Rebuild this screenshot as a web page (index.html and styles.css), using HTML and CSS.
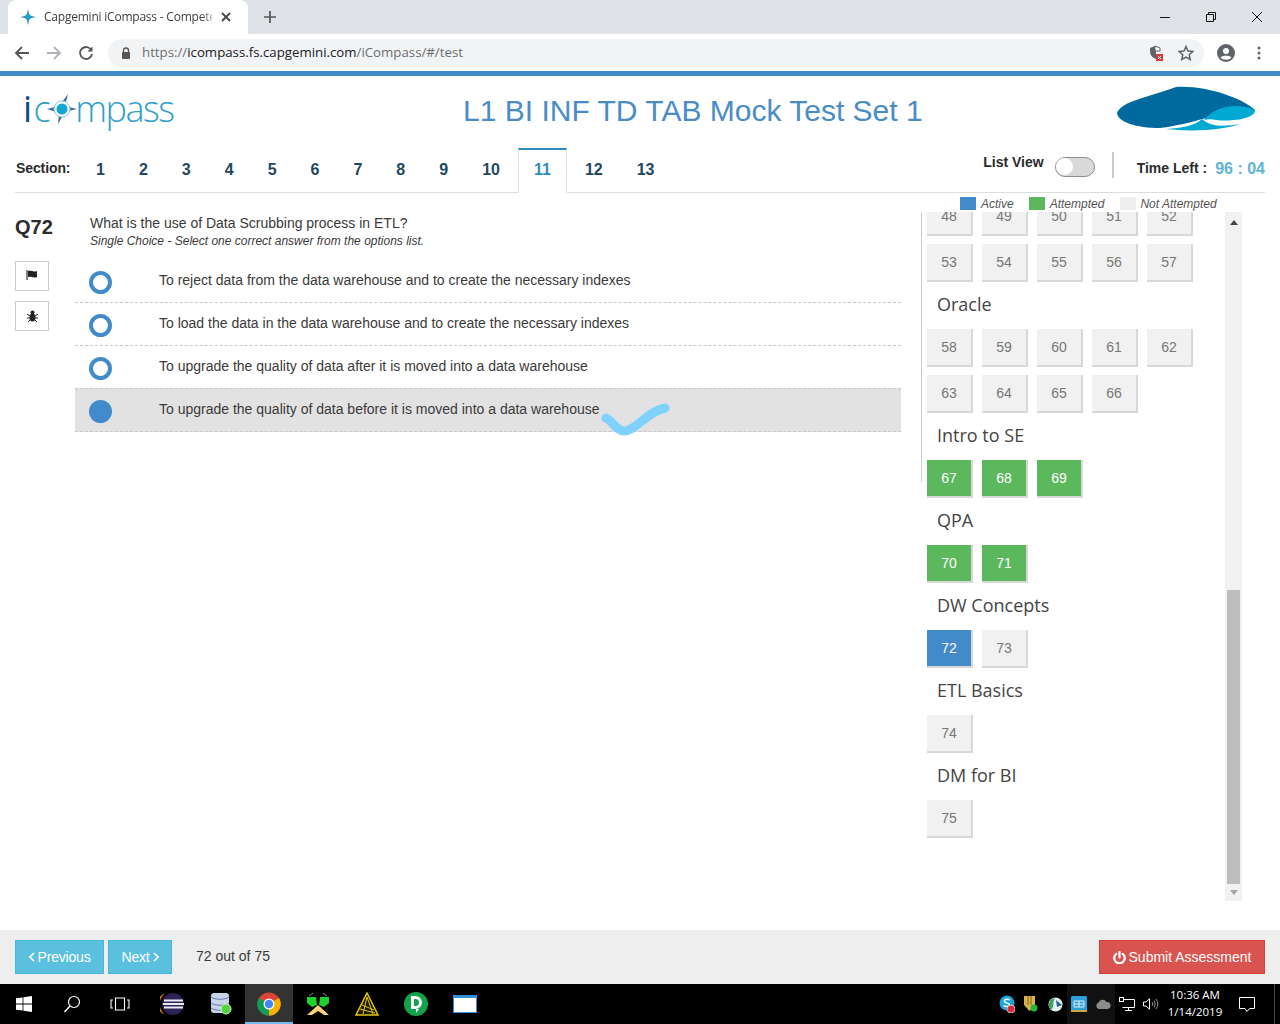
FILE: index.html
```html
<!DOCTYPE html>
<html lang="en">
<head>
<meta charset="utf-8">
<title>Capgemini iCompass</title>
<link rel="stylesheet" href="styles.css">
</head>
<body>
<div class="tabbar">
  <div class="tab">
    <svg class="favicon" width="16" height="16" viewBox="0 0 16 16"><path d="M8 0 9.3 6.7 16 8 9.3 9.3 8 16 6.7 9.3 0 8 6.7 6.7Z" fill="#2f6f9f"/><circle cx="8" cy="8" r="3" fill="#19a5d3"/></svg>
    <span class="tab-title">Capgemini iCompass - Competency Assessment</span>
    <svg class="tab-close" width="10" height="10" viewBox="0 0 10 10"><path d="M1 1 9 9M9 1 1 9" stroke="#444" stroke-width="1.8"/></svg>
  </div>
  <svg class="new-tab" width="12" height="12" viewBox="0 0 12 12"><path d="M6 0V12M0 6H12" stroke="#555" stroke-width="1.7"/></svg>
  <div class="winctl">
    <svg width="12" height="12" viewBox="0 0 12 12"><path d="M1 6.500H11" stroke="#111"/></svg>
    <svg width="12" height="12" viewBox="0 0 12 12"><path d="M1.500 3.500H8.500V10.500H1.500ZM3.500 3.500V1.500H10.500V8.500H8.500" fill="none" stroke="#111"/></svg>
    <svg width="12" height="12" viewBox="0 0 12 12"><path d="M1 1 11 11M11 1 1 11" stroke="#111"/></svg>
  </div>
</div>
<div class="toolbar">
  <svg class="tool" width="16" height="16" viewBox="0 0 16 16"><path d="M15 8H2M8 2 2 8l6 6" fill="none" stroke="#555" stroke-width="1.800"/></svg>
  <svg class="tool" width="16" height="16" viewBox="0 0 16 16"><path d="M1 8H14M8 2l6 6-6 6" fill="none" stroke="#b0b3b7" stroke-width="1.800"/></svg>
  <svg class="tool" width="16" height="16" viewBox="0 0 16 16"><path d="M13.400 5.200A6 6 0 1 0 14 9" fill="none" stroke="#555" stroke-width="1.800"/><path d="M14.500 1.500V6.500H9.500Z" fill="#555"/></svg>
  <div class="omnibox">
    <svg class="lock" width="10" height="12" viewBox="0 0 10 12"><path d="M2.500 5V3.500a2.500 2.500 0 0 1 5 0V5" fill="none" stroke="#555" stroke-width="1.300"/><rect x="1" y="5" width="8" height="7" rx="1" fill="#555"/></svg>
    <span class="url"><span class="url-dim">https://</span>icompass.fs.capgemini.com<span class="url-dim">/iCompass/#/test</span></span>
    <svg class="shield" width="14" height="16" viewBox="0 0 14 16"><path d="M6 1 11 3V6H7V14C3 12.500 1 10 1 6V3Z" fill="#5f6368"/><path d="M6 1 11 3V6H6Z" fill="#fff" stroke="#5f6368"/><rect x="7" y="9" width="7" height="7" fill="#d93b3b"/><path d="M9 11 12 14M12 11 9 14" stroke="#fff"/></svg>
    <svg class="star" width="16" height="16" viewBox="0 0 16 16"><path d="M8 1.500 10 6 14.800 6.500 11.200 9.700 12.200 14.500 8 12 3.800 14.500 4.800 9.700 1.200 6.500 6 6Z" fill="none" stroke="#5f6368" stroke-width="1.500"/></svg>
  </div>
  <svg class="avatar" width="18" height="18" viewBox="0 0 18 18"><circle cx="9" cy="9" r="9" fill="#5f6368"/><circle cx="9" cy="7" r="3" fill="#fff"/><path d="M3.500 13.500C5 11 13 11 14.500 13.500 12 16.500 6 16.500 3.500 13.500Z" fill="#fff"/></svg>
  <svg class="dots" width="4" height="14" viewBox="0 0 4 14"><circle cx="2" cy="2" r="1.500" fill="#5f6368"/><circle cx="2" cy="7" r="1.500" fill="#5f6368"/><circle cx="2" cy="12" r="1.500" fill="#5f6368"/></svg>
</div>

<div class="app">
  <header class="header">
    <div class="brand">
      <span class="brand-i">i</span><span>c</span>
      <svg class="compass" width="32" height="32" viewBox="0 0 32 32"><path d="M22 1 19 13 31 16 19 19 12 31 13 20 1 16 13 13Z" fill="#3f6f9c"/><circle cx="16" cy="16" r="8" fill="#fff" stroke="#8cc6dc" stroke-width="1"/><circle cx="16" cy="16" r="5.500" fill="#12a5d2"/></svg>
      <span>mpass</span>
    </div>
    <h1 class="title">L1 BI INF TD TAB Mock Test Set 1</h1>
    <svg class="cap-logo" width="140" height="46" viewBox="0 0 140 46"><path d="M1 27C6 15 30 12 60 1 90 -1 126 12 139 24 134 32 100 30 86 33 76 36 60 40 44 42 20 42 2 36 1 27Z" fill="#006a9e"/><path d="M88 34C96 22 120 15 139 24 140 32 118 36 100 34 96 33 92 33 88 34Z" fill="#00a9d2"/><path d="M50 43C66 42 78 40 86 33 96 42 110 40 124 38 108 44 76 46 50 43Z" fill="#00a9d2"/></svg>
  </header>

  <nav class="sections">
    <span class="sections-label">Section:</span>
    <ul class="tabs">
      <li class="sec">1</li><li class="sec">2</li><li class="sec">3</li><li class="sec">4</li><li class="sec">5</li><li class="sec">6</li><li class="sec">7</li><li class="sec">8</li><li class="sec">9</li><li class="sec">10</li><li class="sec sec-on">11</li><li class="sec">12</li><li class="sec">13</li>
    </ul>
    <div class="status">
      <span class="listview">List View</span>
      <span class="toggle"><span class="knob"></span></span>
      <span class="divider"></span>
      <span class="timeleft">Time Left :</span>
      <span class="clock">96 : 04</span>
    </div>
  </nav>

  <main class="main">
    <aside class="qside">
      <div class="qnum">Q72</div>
      <button class="qbtn qbtn-flag" aria-label="Flag"><svg width="12" height="10" viewBox="0 0 12 10"><path d="M1 0V10" stroke="#333" stroke-width="1.200"/><path d="M2 1C5 0 7 2.500 11 1V7C7 8.500 5 6 2 7Z" fill="#222"/></svg></button>
      <button class="qbtn" aria-label="Report"><svg width="11" height="12" viewBox="0 0 11 12"><ellipse cx="5.500" cy="7.500" rx="3" ry="4" fill="#222"/><circle cx="5.500" cy="2.500" r="2" fill="#222"/><path d="M0 4 3 6M11 4 8 6M0 8H3M11 8H8M1 12 3 10M10 12 8 10" stroke="#222"/></svg></button>
    </aside>
    <section class="question">
      <p class="qtext">What is the use of Data Scrubbing process in ETL?</p>
      <p class="qhint">Single Choice - Select one correct answer from the options list.</p>
      <ul class="options">
        <li class="option"><span class="radio"></span><span>To reject data from the data warehouse and to create the necessary indexes</span></li>
        <li class="option"><span class="radio"></span><span>To load the data in the data warehouse and to create the necessary indexes</span></li>
        <li class="option"><span class="radio"></span><span>To upgrade the quality of data after it is moved into a data warehouse</span></li>
        <li class="option option-on"><span class="radio radio-on"></span><span>To upgrade the quality of data before it is moved into a data warehouse</span>
          <svg class="tick" width="80" height="40" viewBox="0 0 80 40"><path d="M6 18C12 20 16 31 24 31 36 31 46 12 65 8" fill="none" stroke="#7fd2ff" stroke-width="9" stroke-linecap="round" stroke-linejoin="round"/></svg>
        </li>
      </ul>
    </section>
    <aside class="palette">
      <div class="legend">
        <span class="swatch sw-active"></span><span class="lg lg-a">Active</span>
        <span class="swatch sw-att"></span><span class="lg lg-b">Attempted</span>
        <span class="swatch sw-not"></span><span class="lg">Not Attempted</span>
      </div>
      <div class="panel">
        <span class="rail"></span>
        <div class="scroller">
          <div class="list">
            <div class="grid"><span class="q">48</span><span class="q">49</span><span class="q">50</span><span class="q">51</span><span class="q">52</span><span class="q">53</span><span class="q">54</span><span class="q">55</span><span class="q">56</span><span class="q">57</span></div>
            <h3 class="topic">Oracle</h3>
            <div class="grid"><span class="q">58</span><span class="q">59</span><span class="q">60</span><span class="q">61</span><span class="q">62</span><span class="q">63</span><span class="q">64</span><span class="q">65</span><span class="q">66</span></div>
            <h3 class="topic">Intro to SE</h3>
            <div class="grid"><span class="q q-done">67</span><span class="q q-done">68</span><span class="q q-done">69</span></div>
            <h3 class="topic">QPA</h3>
            <div class="grid"><span class="q q-done">70</span><span class="q q-done">71</span></div>
            <h3 class="topic">DW Concepts</h3>
            <div class="grid"><span class="q q-now">72</span><span class="q">73</span></div>
            <h3 class="topic">ETL Basics</h3>
            <div class="grid"><span class="q">74</span></div>
            <h3 class="topic">DM for BI</h3>
            <div class="grid"><span class="q">75</span></div>
          </div>
        </div>
        <div class="scrollbar">
          <svg class="arrow" width="8" height="5" viewBox="0 0 8 5"><path d="M4 0 8 5H0Z" fill="#444"/></svg>
          <span class="thumb"></span>
          <svg class="arrow" width="8" height="5" viewBox="0 0 8 5"><path d="M0 0H8L4 5Z" fill="#a5a5a5"/></svg>
        </div>
      </div>
    </aside>
  </main>

  <footer class="footer">
    <button class="btn btn-info"><svg width="6" height="10" viewBox="0 0 6 10"><path d="M5 1 1 5 5 9" fill="none" stroke="#fff" stroke-width="1.600"/></svg> Previous</button>
    <button class="btn btn-info btn-next">Next <svg width="6" height="10" viewBox="0 0 6 10"><path d="M1 1 5 5 1 9" fill="none" stroke="#fff" stroke-width="1.600"/></svg></button>
    <span class="progress">72 out of 75</span>
    <button class="btn btn-danger"><svg width="13" height="13" viewBox="0 0 13 13"><path d="M6.500 1V6.500" stroke="#fff" stroke-width="2.200" stroke-linecap="round"/><path d="M3.300 2.800A5.300 5.300 0 1 0 9.700 2.800" fill="none" stroke="#fff" stroke-width="2.200" stroke-linecap="round"/></svg> Submit Assessment</button>
  </footer>
</div>

<div class="taskbar">
  <span class="tb tb-sys"><svg width="16" height="16" viewBox="0 0 16 16"><path d="M0 2.300 6.600 1.400V7.500H0ZM7.400 1.300 16 0V7.500H7.400ZM0 8.500H6.600V14.600L0 13.700ZM7.400 8.500H16V16L7.400 14.700Z" fill="#fff"/></svg></span>
  <span class="tb tb-sys"><svg width="18" height="18" viewBox="0 0 18 18"><circle cx="11" cy="7" r="5.500" fill="none" stroke="#fff" stroke-width="1.200"/><path d="M7 11 1.500 17" stroke="#fff" stroke-width="1.500"/></svg></span>
  <span class="tb tb-sys"><svg width="20" height="14" viewBox="0 0 20 14"><path d="M5.500 1H14.500V13H5.500ZM3 3H1V11H3M17 3H19V11H17" fill="none" stroke="#fff" stroke-width="1.100"/></svg></span>
  <span class="tb tb-app tb-first"><svg width="24" height="24" viewBox="0 0 24 24"><circle cx="13" cy="12" r="11" fill="#2c2255"/><path d="M5 1.500A11 11 0 0 0 5 22.500 13 13 0 0 1 5 1.500Z" fill="#e8851f"/><path d="M4 8.500H23M3 12H24M4 15.500H23" stroke="#e9e9f2" stroke-width="1.800"/></svg></span>
  <span class="tb tb-app"><svg width="24" height="24" viewBox="0 0 24 24"><rect x="2" y="1" width="18" height="20" rx="3" fill="#c8d4ea"/><path d="M2 5C6 8 16 8 20 5M2 11C6 14 16 14 20 11M2 16C6 19 16 19 20 16" stroke="#6279a8" fill="none"/><circle cx="17" cy="17" r="5" fill="#55d33f" stroke="#d5f5cc"/></svg></span>
  <span class="tb tb-app tb-chrome"><svg width="24" height="24" viewBox="0 0 24 24"><circle cx="12" cy="12" r="11.500" fill="#db4437"/><path d="M12 12 22 6A11.500 11.500 0 0 1 12 23.500Z" fill="#f4b400"/><path d="M12 12 12 23.500A11.500 11.500 0 0 1 2 6Z" fill="#0f9d58"/><circle cx="12" cy="12" r="5.500" fill="#fff"/><circle cx="12" cy="12" r="4.200" fill="#4285f4"/></svg></span>
  <span class="tb tb-app"><svg width="24" height="24" viewBox="0 0 24 24"><path d="M1 5H10L11 13 6 15 1 11ZM14 5H23V11L18 15 13 13Z" fill="#1fd12b"/><path d="M3 4 7 1M21 4 17 1" stroke="#888"/><path d="M12 13 1 23H6L12 19 18 23H23Z" fill="#f6d27a"/></svg></span>
  <span class="tb tb-app"><svg width="24" height="24" viewBox="0 0 24 24"><path d="M12 1 23 23H1Z" fill="#1b1b00" stroke="#e2c400" stroke-width="1.500"/><path d="M12 5 8 22M12 5 18 22M5 17 20 21M7 13 19 18" stroke="#e2c400"/></svg></span>
  <span class="tb tb-app"><svg width="24" height="24" viewBox="0 0 24 24"><circle cx="12" cy="12" r="12" fill="#12a34a"/><path d="M7 4H11.500A6.500 6.500 0 0 1 11.500 17H7ZM10 7V14H11.500A3.500 3.500 0 0 0 11.500 7ZM12 17H15L12 21Z" fill="#fff" fill-rule="evenodd"/></svg></span>
  <span class="tb tb-app"><svg width="24" height="18" viewBox="0 0 24 18"><rect width="24" height="18" fill="#2f8fd8"/><rect x="1" y="3" width="22" height="14" fill="#fff"/></svg></span>
  <div class="tray">
    <span class="ti"><svg width="16" height="18" viewBox="0 0 16 18"><circle cx="8" cy="8" r="7.500" fill="#1aa5e0"/><path d="M11 5C9 3.500 5 4 5.500 6.500 6 8.500 10.500 7.500 10.500 10 10.500 12 6 12 4.500 10.500" fill="none" stroke="#fff" stroke-width="1.500"/><circle cx="12" cy="14" r="4" fill="#d92b3a" stroke="#fff" stroke-width=".6"/></svg></span>
    <span class="ti"><svg width="14" height="16" viewBox="0 0 14 16"><path d="M0 0H11V9L5.500 15 0 9Z" fill="#d8b24a"/><path d="M4 0V9M7 0V9" stroke="#7d6520"/><circle cx="10" cy="12" r="3.500" fill="#27b537"/></svg></span>
    <span class="ti"><svg width="15" height="15" viewBox="0 0 15 15"><circle cx="7.500" cy="7.500" r="7" fill="#e8f0ee"/><path d="M7 1A7 7 0 0 0 3 13C7 9 4 5 7 1Z" fill="#3f9f5f"/><path d="M8 3 14 8 9 10Z" fill="#2b5f8f"/></svg></span>
    <span class="ti ti-lit"><svg width="16" height="16" viewBox="0 0 16 16"><rect width="16" height="16" rx="1.500" fill="#2c9ed8"/><path d="M3 5H13V11H3ZM3 8H13M8 5V11" stroke="#d9f0ff" fill="none"/><path d="M0 14H16V16H0Z" fill="#c9a63a"/></svg></span>
    <span class="ti ti-lit"><svg width="16" height="10" viewBox="0 0 16 10"><path d="M3.500 10A3.500 3.500 0 0 1 3.500 3.500 4.500 4.500 0 0 1 11.500 3 3.500 3.500 0 0 1 12.500 10Z" fill="#8b8b8b"/></svg></span>
    <span class="ti"><svg width="16" height="14" viewBox="0 0 16 14"><path d="M3.500 2.500H15.500V10.500H3.500M9.500 10.500V13.500M6 13.500H13" fill="none" stroke="#fff"/><rect x=".5" y=".5" width="4" height="4" fill="#000" stroke="#fff"/></svg></span>
    <span class="ti"><svg width="16" height="12" viewBox="0 0 16 12"><path d="M.5 4H3L6.500 .8V11.200L3 8H.5Z" fill="none" stroke="#fff"/><path d="M9 4A3 3 0 0 1 9 8M11 2.500A6 6 0 0 1 11 9.500M13 1A8.500 8.500 0 0 1 13 11" fill="none" stroke="#999"/></svg></span>
    <span class="dt"><span>10:36 AM</span><span>1/14/2019</span></span>
    <span class="notif"><svg width="16" height="15" viewBox="0 0 16 15"><path d="M.5 .5H15.500V11.500H10.500L8 14.500 6 11.500H.5Z" fill="none" stroke="#fff"/></svg></span>
    <span class="showdesk"></span>
  </div>
</div>
</body>
</html>
```
FILE: styles.css
```css
* { box-sizing: border-box; }
html, body { margin: 0; padding: 0; }
body {
  width: 1280px;
  height: 1024px;
  overflow: hidden;
  display: flex;
  flex-direction: column;
  font-family: "Liberation Sans", Arial, sans-serif;
  font-size: 14px;
  color: #3a3a3a;
  background: #fff;
}
ul { list-style: none; margin: 0; padding: 0; }
p, h1, h3 { margin: 0; }

/* browser frame */
.tabbar {
  height: 34px;
  flex: none;
  background: #dee1e6;
  display: flex;
  align-items: center;
  padding-left: 8px;
}
.tab {
  width: 240px;
  height: 34px;
  background: #fff;
  border-radius: 8px 8px 0 0;
  display: flex;
  align-items: center;
  padding: 0 17px 0 12px;
}
.favicon { flex: none; }
.tab-title {
  margin-left: 8px;
  width: 174px;
  white-space: nowrap;
  overflow: hidden;
  font: 12px/16px "Open Sans", sans-serif;
  letter-spacing: -.22px;
  color: #3c4043;
  -webkit-mask-image: linear-gradient(to right, #000 158px, transparent 174px);
  mask-image: linear-gradient(to right, #000 158px, transparent 174px);
}
.tab-close { margin-left: 9px; flex: none; }
.new-tab { margin-left: 16px; }
.winctl { margin-left: auto; display: flex; gap: 34px; padding-right: 17px; align-items: center; }
.toolbar {
  height: 37px;
  flex: none;
  background: #fff;
  display: flex;
  align-items: center;
  padding: 0 0 0 14px;
  gap: 16px;
}
.omnibox {
  width: 1096px;
  height: 28px;
  margin-left: -2px;
  background: #f1f3f4;
  border-radius: 14px;
  display: flex;
  align-items: center;
  padding: 0 10px 0 13px;
}
.url {
  margin: -2px 0 0 11px;
  font: 13.25px/18px "Open Sans", sans-serif;
  color: #202124;
}
.url-dim { color: #6b6f73; }
.shield { margin-left: auto; }
.star { margin-left: 15px; }
.avatar { margin-left: -3px; }
.dots { margin-left: 6px; }

/* page */
.app {
  flex: 1;
  display: flex;
  flex-direction: column;
  border-top: 5px solid #428bca;
  min-height: 0;
}
.header {
  height: 72px;
  flex: none;
  display: flex;
  align-items: center;
  padding: 0 25px;
}
.brand {
  width: 438px;
  margin-top: -6px;
  margin-left: -2px;
  display: flex;
  align-items: center;
  font: 300 36px/44px "Open Sans", sans-serif;
  color: #2f9fc9;
  letter-spacing: -1.500px;
}
.brand-i { color: #0f4c8a; font-weight: 400; margin-right: 3px; }
.compass { margin: 0 -3px 0 -3px; }
.title {
  margin-top: -2px;
  margin-left: 2px;
  font-size: 30px;
  font-weight: 400;
  line-height: 36px;
  color: #4a8cc8;
}
.cap-logo { margin-left: auto; margin-right: -1px; margin-top: -6px; }

.sections {
  height: 45px;
  flex: none;
  margin: 0 15px;
  border-bottom: 1px solid #ddd;
  display: flex;
  align-items: stretch;
}
.sections-label { font-weight: 700; width: 64px; padding: 12px 0 0 1px; line-height: 16px; letter-spacing: -.1px; color: #2b2b2b; }
.tabs { display: flex; margin-bottom: -1px; }
.sec {
  padding: 0 17px;
  font-size: 16px;
  font-weight: 700;
  line-height: 40px;
  color: #23475f;
  border: 1px solid transparent;
  border-width: 2px 0 0;
}
.sec-on {
  color: #2f8cc0;
  background: #fff;
  border: 1px solid #ddd;
  border-top: 2px solid #2f8cc0;
  border-bottom-color: #fff;
  padding: 0 15px;
  margin: 0 1px;
}
.status { margin-left: auto; display: flex; align-items: flex-start; }
.listview { font-weight: 700; line-height: 16px; margin-top: 6px; color: #2b2b2b; }
.toggle {
  width: 40px;
  height: 20px;
  margin: 9px 0 0 11px;
  border: 1.500px solid #8e8e8e;
  border-radius: 10px;
  background: #d9d9d9;
  display: block;
}
.knob { display: block; width: 17px; height: 17px; border-radius: 50%; background: #fff; }
.divider { width: 2px; height: 26px; margin: 4px 23px 0 17px; background: #ccc; }
.timeleft { font-weight: 700; line-height: 16px; margin-top: 12px; color: #2b2b2b; }
.clock { font-size: 16px; font-weight: 700; line-height: 18px; margin: 12px 0 0 8px; color: #5bb5d5; }

.main { flex: 1; display: flex; min-height: 0; }
.qside { width: 75px; flex: none; padding: 23px 0 0 15px; }
.qnum { font-size: 20px; font-weight: 700; line-height: 22px; margin-bottom: 23px; color: #2b2b2b; }
.qbtn {
  display: flex;
  align-items: center;
  justify-content: center;
  width: 34px;
  height: 30px;
  padding: 0;
  margin-bottom: 10px;
  background: #fff;
  border: 1px solid #ccc;
}
.qbtn-flag svg { margin-top: -2px; }
.question { width: 826px; flex: none; }
.qtext { padding: 22px 0 0 15px; line-height: 17px; }
.qhint { padding: 2px 0 0 15px; font-size: 12px; font-style: italic; line-height: 15px; }
.options { margin-top: 11px; }
.option {
  position: relative;
  height: 43px;
  display: flex;
  align-items: center;
  padding: 0 0 0 14px;
  border-bottom: 1px dashed #c9c9c9;
  line-height: 17px;
}
.option > span:last-of-type { margin-top: -1px; }
.option-on { background: #e3e2e3; border-top: 1px dashed #c9c9c9; margin-top: -1px; height: 44px; }
.radio {
  width: 23px;
  height: 23px;
  flex: none;
  margin: 2px 47px 0 0;
  border: 4.500px solid #428bca;
  border-radius: 50%;
  background: #fff;
}
.radio-on { background: #428bca; }
.tick { position: absolute; left: 525px; top: 11px; }

.palette { width: 321px; margin-left: 20px; flex: none; display: flex; flex-direction: column; }
.legend {
  height: 19px;
  flex: none;
  display: flex;
  align-items: center;
  padding: 2px 0 0 39px;
  font-size: 12px;
  font-style: italic;
  color: #555;
}
.swatch { width: 16px; height: 13px; flex: none; margin-right: 5px; }
.sw-active { background: #428bca; }
.sw-att { background: #5cb85c; }
.sw-not { background: #efefef; margin-right: 4px; }
.lg-a { margin-right: 15px; }
.lg-b { margin-right: 16px; }
.panel { height: 689px; flex: none; display: flex; }
.rail { width: 1px; height: 270px; flex: none; background: #ccc; }
.scroller { flex: 1; overflow: hidden; padding-left: 5px; }
.list { margin-top: -14px; }
.grid { display: flex; flex-wrap: wrap; gap: 8px 9px; width: 280px; margin-bottom: 8px; }
.q {
  width: 46px;
  height: 38px;
  background: #f1f1f1;
  border-right: 2px solid #d8d8d8;
  border-bottom: 2px solid #d8d8d8;
  color: #777;
  text-align: center;
  line-height: 36px;
}
.q-done { background: #5cb85c; color: #fff; }
.q-now { background: #428bca; color: #fff; }
.topic {
  font: 400 18px/28px "Open Sans", sans-serif;
  color: #444;
  padding-left: 10px;
  margin-bottom: 11px;
}
.scrollbar {
  width: 17px;
  flex: none;
  background: #f1f1f1;
  display: flex;
  flex-direction: column;
  align-items: center;
  justify-content: flex-end;
  padding-bottom: 6px;
}
.arrow { flex: none; }
.scrollbar .arrow:first-child { margin-bottom: auto; margin-top: 8px; }
.thumb { width: 13px; height: 294px; background: #bdbdbd; margin-bottom: 6px; }

.footer {
  height: 54px;
  flex: none;
  background: #eee;
  display: flex;
  align-items: center;
  padding: 0 15px;
}
.btn {
  height: 34px;
  font: 14px "Liberation Sans", Arial, sans-serif;
  color: #fff;
  display: flex;
  align-items: center;
  justify-content: center;
  gap: 3px;
  padding: 0;
}
.btn-info { background: #5bc0de; border: 1px solid #46b8da; width: 89px; letter-spacing: -.2px; }
.btn-next { width: 64px; margin-left: 4px; }
.progress { margin-left: 24px; margin-top: -2px; }
.btn-danger { margin-left: auto; width: 166px; background: #d9534f; border: 1px solid #d43f3a; }

.taskbar {
  height: 40px;
  flex: none;
  background: #000;
  display: flex;
  align-items: stretch;
}
.tb { display: flex; align-items: center; justify-content: center; }
.tb-sys { width: 48px; }
.tb-app { width: 49px; }
.tb-first { margin-left: 3px; }
.tb-chrome { width: 48px; background: #333; border-bottom: 2px solid #76b9ed; padding-top: 2px; }
.tray { margin-left: auto; display: flex; align-items: stretch; }
.ti { width: 24px; display: flex; align-items: center; justify-content: center; }
.ti-lit { background: #111; }
.dt {
  width: 64px;
  display: flex;
  flex-direction: column;
  justify-content: center;
  align-items: center;
  padding-bottom: 2px;
  font: 11.5px/17px "Open Sans", sans-serif;
  color: #fff;
}
.notif { width: 40px; display: flex; align-items: center; justify-content: center; }
.showdesk { width: 13px; border-right: 5px solid #000; background: linear-gradient(to right, #000 7px, #444 7px); }
```
